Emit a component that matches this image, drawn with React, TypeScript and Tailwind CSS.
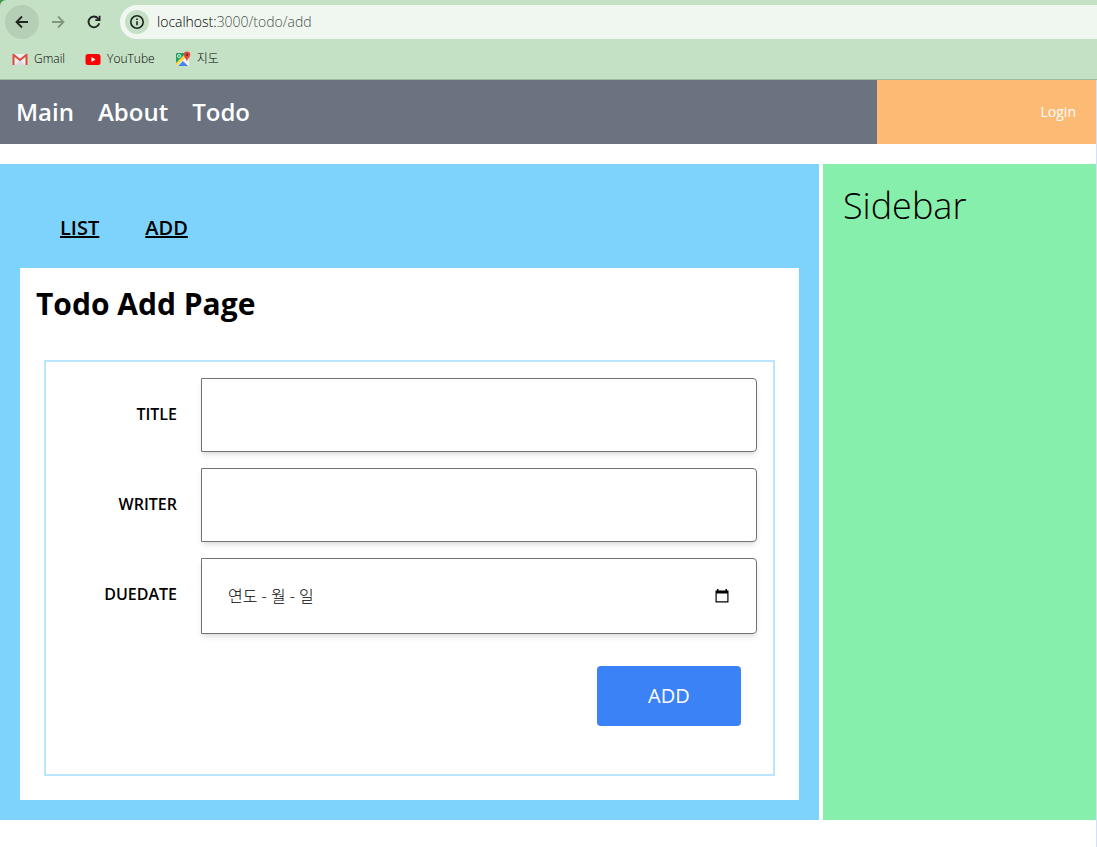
import { useState } from "react";
import type { ReactNode } from "react";

const bookmarks = [
  { label: "Gmail", icon: <GmailIcon /> },
  { label: "YouTube", icon: <YoutubeIcon /> },
  { label: "지도", icon: <MapsIcon /> },
];

const menus = ["Main", "About", "Todo"];

function GmailIcon() {
  return (
    <svg className="w-4 h-4" viewBox="0 0 16 16">
      <path d="M1 3h14v11H1z" fill="#eceff1" />
      <path d="M3 14l5-5 5 5z" fill="#d8dcde" />
      <path d="M1.5 14V3.8L8 9l6.5-5.2V14" fill="none" stroke="#dd4b3e" strokeWidth="2" strokeLinejoin="round" />
    </svg>
  );
}

function YoutubeIcon() {
  return (
    <svg className="w-4 h-4" viewBox="0 0 16 16">
      <rect x="0.5" y="3" width="15" height="11" rx="2.5" fill="#f00" />
      <path d="M6.5 6v5l4-2.5z" fill="#fff" />
    </svg>
  );
}

function MapsIcon() {
  return (
    <svg className="w-4 h-4" viewBox="0 0 16 16">
      <rect x="1" y="2" width="13" height="13" rx="1" fill="#1fa463" />
      <path d="M1 14.5L13.5 2l.5 1v12H2z" fill="#f1f1f1" />
      <path d="M1 12L9 4l2 2-9.5 9L1 14z" fill="#fdd641" />
      <path d="M3 15l5-5 5 5z" fill="#4285f4" />
      <circle cx="4" cy="5" r="1.5" fill="none" stroke="#d7f0e2" />
      <path d="M12 .5a3.300 3.300 0 0 0-3.300 3.300C8.700 6.300 11 7 12 10.500c1-3.500 3.300-4.200 3.300-6.700A3.300 3.300 0 0 0 12 .5z" fill="#e04a3f" />
      <circle cx="12" cy="3.8" r="1.2" fill="#7d2a22" />
    </svg>
  );
}

function BrowserBar() {
  return (
    <div className="bg-[#3f9a45]">
      <div className="bg-[#c5e1c5] border-b border-[#9db89d] rounded-tl-md pt-[5px] h-20">
        <div className="flex items-center pl-[5px]">
          <button aria-label="Back" className="w-[34px] h-[34px] rounded-full bg-[#b5cfb6] flex items-center justify-center text-[#1f2420]">
            <svg className="w-4 h-4" viewBox="0 0 16 16" fill="none" stroke="currentColor" strokeWidth="1.8">
              <path d="M14 8H3M8 2.5L2.5 8 8 13.5" />
            </svg>
          </button>
          <button aria-label="Forward" className="w-[38px] h-[34px] flex items-center justify-center text-[#82967f]">
            <svg className="w-4 h-4" viewBox="0 0 16 16" fill="none" stroke="currentColor" strokeWidth="1.8">
              <path d="M2 8h11M8 2.5L13.5 8 8 13.5" />
            </svg>
          </button>
          <button aria-label="Reload" className="w-[34px] h-[34px] flex items-center justify-center text-[#1f2420]">
            <svg className="w-4 h-4" viewBox="0 0 16 16" fill="none" stroke="currentColor" strokeWidth="1.8">
              <path d="M13.2 9.2A5.4 5.4 0 1 1 12 4.3l1.2 1.2" />
              <path d="M13.6 1.8v4.3H9.3" />
            </svg>
          </button>
          <div className="flex-1 flex items-center h-[34px] ml-[9px] pl-[5px] gap-2 rounded-l-full bg-[#f0f7f0]">
            <span className="w-6 h-6 rounded-full bg-[#c5e1c5] flex items-center justify-center text-[#1f2420]">
              <svg className="w-4 h-4" viewBox="0 0 16 16" fill="none" stroke="currentColor" strokeWidth="1.6">
                <circle cx="8" cy="8" r="6.2" />
                <path d="M8 7.2v4M8 4.5v1.6" />
              </svg>
            </span>
            <span className="text-sm font-light text-black">
              localhost:<span className="text-[#4b524b]">3000/todo/add</span>
            </span>
          </div>
        </div>
        <div className="flex gap-5 pl-3 pt-2.5 text-xs font-light text-black">
          {bookmarks.map((item) => (
            <a key={item.label} href="#" className="flex items-center gap-1.5 h-5">
              {item.icon}
              {item.label}
            </a>
          ))}
        </div>
      </div>
    </div>
  );
}

function Field({ id, label, children }: { id: string; label: string; children: ReactNode }) {
  return (
    <div className="flex items-start w-full">
      <label htmlFor={id} className="w-1/5 p-6 text-right font-semibold">
        {label}
      </label>
      {children}
    </div>
  );
}

function AddForm() {
  const [todo, setTodo] = useState({ title: "", writer: "", dueDate: "" });

  const handleChange = (e: React.ChangeEvent<HTMLInputElement>) => {
    setTodo({ ...todo, [e.target.name]: e.target.value });
  };

  return (
    <form className="border-2 border-[#bae6fd] mt-9 mx-2 p-4 pb-12 flex flex-col gap-4" onSubmit={(e) => e.preventDefault()}>
      <Field id="title" label="TITLE">
        <input
          id="title"
          name="title"
          type="text"
          value={todo.title}
          onChange={handleChange}
          className="w-4/5 h-[74px] p-6 rounded-r-sm border border-[#737373] shadow-md"
        />
      </Field>
      <Field id="writer" label="WRITER">
        <input
          id="writer"
          name="writer"
          type="text"
          value={todo.writer}
          onChange={handleChange}
          className="w-4/5 h-[74px] p-6 rounded-r-sm border border-[#737373] shadow-md"
        />
      </Field>
      <Field id="dueDate" label="DUEDATE">
        <div className="w-4/5 h-[76px] flex items-center rounded-r-sm border border-[#737373] shadow-md px-6">
          <input
            id="dueDate"
            name="dueDate"
            type="text"
            placeholder="연도 - 월 - 일"
            value={todo.dueDate}
            onChange={handleChange}
            className="flex-1 min-w-0 px-0.5 font-light outline-none placeholder:text-black"
          />
          <button type="button" aria-label="Open calendar" className="p-0.5">
            <svg className="w-4 h-4" viewBox="0 0 16 16">
              <path d="M1.5 2.5H3V1h1.5v1.500h7V1H13v1.500h1.500v12h-13zM2.700 5.500v7.700h10.600V5.500z" fill="#000" fillRule="evenodd" />
            </svg>
          </button>
        </div>
      </Field>
      <div className="flex justify-end p-4 pb-0">
        <button type="submit" className="w-36 h-[60px] rounded bg-[#3b82f6] text-xl text-white">
          ADD
        </button>
      </div>
    </form>
  );
}

export default function App() {
  return (
    <div className="min-h-screen bg-white text-black font-['Open_Sans','Noto_Sans_CJK_KR',sans-serif] flex flex-col">
      <BrowserBar />

      <div className="flex-1 border-r border-[#d3e0f7]">
        {/* Top menu */}
        <header className="flex h-16">
          <nav className="w-4/5 bg-[#6b7280] p-4">
            <ul className="flex gap-6 text-2xl font-semibold text-white">
              {menus.map((menu) => (
                <li key={menu}>
                  <a href="#">{menu}</a>
                </li>
              ))}
            </ul>
          </nav>
          <div className="w-1/5 bg-[#fdba74] flex items-center justify-end px-5">
            <a href="#" className="text-sm text-white">
              Login
            </a>
          </div>
        </header>

        <div className="flex gap-1 mt-5">
          <main className="w-3/4 bg-[#7dd3fc] p-5">
            <nav className="flex gap-[46px] px-10 pt-7 pb-6 text-xl leading-8 font-semibold">
              <a href="#" className="underline">
                LIST
              </a>
              <a href="#" className="underline">
                ADD
              </a>
            </nav>

            <section className="bg-white p-4 pb-6">
              <h1 className="text-3xl leading-10 font-bold">Todo Add Page</h1>
              <AddForm />
            </section>
          </main>

          <aside className="w-1/4 bg-[#86efac] p-5">
            <h2 className="text-4xl leading-11 font-light">Sidebar</h2>
          </aside>
        </div>
      </div>
    </div>
  );
}
